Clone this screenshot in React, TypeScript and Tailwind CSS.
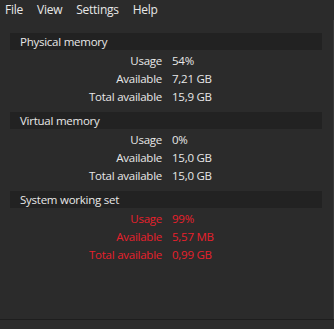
const sections = [
  {
    title: 'Physical memory',
    red: false,
    rows: [
      ['Usage', '54%'],
      ['Available', '7,21 GB'],
      ['Total available', '15,9 GB'],
    ],
  },
  {
    title: 'Virtual memory',
    red: false,
    rows: [
      ['Usage', '0%'],
      ['Available', '15,0 GB'],
      ['Total available', '15,0 GB'],
    ],
  },
  {
    title: 'System working set',
    red: true,
    rows: [
      ['Usage', '99%'],
      ['Available', '5,57 MB'],
      ['Total available', '0,99 GB'],
    ],
  },
];

export default function App() {
  return (
    <div
      className="flex h-[329px] w-[334px] flex-col overflow-hidden bg-[#2b2b2b] text-[11.5px] tracking-[-0.25px] text-[#e8e8e8]"
      style={{ fontFamily: '"Open Sans", "Noto Sans", sans-serif' }}
    >
      <div className="flex h-[20px] items-center gap-[14px] pl-[5px] text-[12px]">
        <span>File</span>
        <span>View</span>
        <span>Settings</span>
        <span>Help</span>
      </div>
      <div className="flex-1 border-r border-[#3a3a3a] pt-[13px]">
        {sections.map((s) => (
          <div key={s.title} className="mb-[6px] ml-[10px] w-[312px]">
            <div className="flex h-[17px] items-center bg-[#222222] pl-[10px]">{s.title}</div>
            <div className="mt-[2px]">
              {s.rows.map(([label, value]) => (
                <div
                  key={label}
                  className={`flex h-[18px] items-center ${s.red ? 'text-[#e8202c]' : ''}`}
                >
                  <span className="w-[152px] text-right">{label}</span>
                  <span className="pl-[10px]">{value}</span>
                </div>
              ))}
            </div>
          </div>
        ))}
      </div>
      <div className="h-[10px] border-t border-[#1e1e1e] bg-[#2d2d2d]" />
    </div>
  );
}
